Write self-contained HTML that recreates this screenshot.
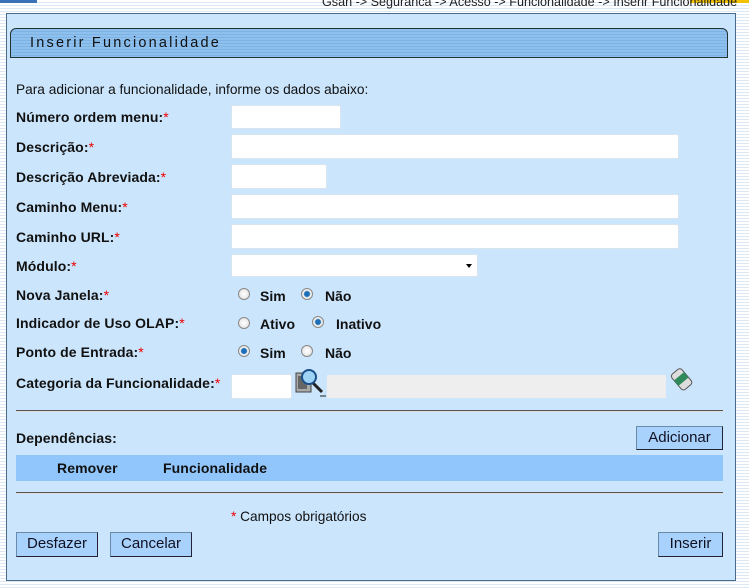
<!DOCTYPE html>
<html><head><meta charset="utf-8">
<style>
*{margin:0;padding:0;box-sizing:border-box}
body{width:749px;height:588px;overflow:hidden;position:relative;font-family:"Liberation Sans",Arial,sans-serif;
background:repeating-linear-gradient(180deg,#ffffff 0 2px,#dbe9f7 2px 3px);}
.a{position:absolute}
.panel{left:6px;top:13px;width:730px;height:568px;background:#cbe5fc;border:1px solid #4a6a8a;}
.title{left:10px;top:28px;width:718px;height:30px;border:1px solid #233;border-radius:6px 6px 0 0;
background:repeating-linear-gradient(180deg,#8ec0ee 0 2px,#7fb3e6 2px 3px);font-size:14.5px;letter-spacing:2.2px;color:#111;padding:6px 0 0 19px}
.lbl{font-size:14px;font-weight:bold;color:#111;left:16px;letter-spacing:0.1px}
.r{color:#e00;font-weight:normal}
.inp{background:#fff;border:1px solid #d8e4ee;border-radius:2px}
.rad{width:12px;height:12px;border-radius:50%;border:1px solid #888;background:radial-gradient(#fff,#ddd)}
.rad.on{background:radial-gradient(#1a6fb8 0 2.5px,#eee 3.5px)}
.rt{font-size:14px;font-weight:bold;color:#111}
.btn{background:#a8d2fb;border:1px solid #6a8aaa;border-right-color:#223;border-bottom-color:#223;font-size:15px;color:#112;text-align:center;line-height:22px}
.hr{left:16px;width:707px;height:2px;background:#555;border-bottom:1px solid #ddd}
</style></head><body>
<div class="a" style="left:0;top:0;width:37px;height:3px;background:#3a72b8"></div>
<div class="a" style="left:690px;top:0;width:59px;height:3px;background:#f2c200"></div>
<div class="a" style="left:322px;top:-5px;font-size:12.6px;color:#222">Gsan -&gt; Seguranca -&gt; Acesso -&gt; Funcionalidade -&gt; Inserir Funcionalidade</div>
<div class="a panel"></div>
<div class="a title">Inserir Funcionalidade</div>
<div class="a" style="left:16px;top:82px;font-size:13.7px;color:#111">Para adicionar a funcionalidade, informe os dados abaixo:</div>

<div class="a lbl" style="top:109px">Número ordem menu:<span class="r">*</span></div>
<div class="a inp" style="left:231px;top:105px;width:110px;height:24px"></div>
<div class="a lbl" style="top:139px">Descrição:<span class="r">*</span></div>
<div class="a inp" style="left:231px;top:134px;width:448px;height:25px"></div>
<div class="a lbl" style="top:169px">Descrição Abreviada:<span class="r">*</span></div>
<div class="a inp" style="left:231px;top:164px;width:96px;height:25px"></div>
<div class="a lbl" style="top:199px">Caminho Menu:<span class="r">*</span></div>
<div class="a inp" style="left:231px;top:194px;width:448px;height:25px"></div>
<div class="a lbl" style="top:229px">Caminho URL:<span class="r">*</span></div>
<div class="a inp" style="left:231px;top:224px;width:448px;height:25px"></div>
<div class="a lbl" style="top:258px">Módulo:<span class="r">*</span></div>
<div class="a inp" style="left:231px;top:254px;width:247px;height:23px"></div>
<div class="a" style="left:466px;top:264px;border-left:3px solid transparent;border-right:3px solid transparent;border-top:4px solid #000"></div>

<div class="a lbl" style="top:287px">Nova Janela:<span class="r">*</span></div>
<div class="a rad" style="left:238px;top:288px"></div><div class="a rt" style="left:260px;top:288px">Sim</div>
<div class="a rad on" style="left:301px;top:288px"></div><div class="a rt" style="left:325px;top:288px">Não</div>
<div class="a lbl" style="top:315px">Indicador de Uso OLAP:<span class="r">*</span></div>
<div class="a rad" style="left:238px;top:317px"></div><div class="a rt" style="left:260px;top:316px">Ativo</div>
<div class="a rad on" style="left:312px;top:316px"></div><div class="a rt" style="left:336px;top:316px">Inativo</div>
<div class="a lbl" style="top:344px">Ponto de Entrada:<span class="r">*</span></div>
<div class="a rad on" style="left:238px;top:345px"></div><div class="a rt" style="left:260px;top:345px">Sim</div>
<div class="a rad" style="left:301px;top:345px"></div><div class="a rt" style="left:325px;top:345px">Não</div>

<div class="a lbl" style="top:375px">Categoria da Funcionalidade:<span class="r">*</span></div>
<div class="a inp" style="left:231px;top:374px;width:61px;height:25px"></div>
<svg class="a" style="left:295px;top:367px" width="32" height="30" viewBox="0 0 32 30">
<rect x="1" y="6" width="15" height="19" fill="#aaa" stroke="#444"/><rect x="3" y="9" width="9" height="13" fill="#666"/>
<line x1="18" y1="16" x2="27" y2="25" stroke="#222" stroke-width="3"/>
<circle cx="14" cy="10" r="7" fill="#9fd3f5" stroke="#1a4f8a" stroke-width="2"/>
<line x1="25" y1="29" x2="31" y2="29" stroke="#222"/></svg>
<div class="a" style="left:327px;top:375px;width:339px;height:23px;background:#eeeeee"></div>
<svg class="a" style="left:670px;top:366px" width="24" height="26" viewBox="0 0 24 26">
<g transform="rotate(-40 12 13)"><rect x="5" y="3" width="13" height="20" rx="3" fill="#ddd" stroke="#555"/><rect x="5" y="9" width="13" height="7" fill="#2e8a5a"/></g></svg>

<div class="a hr" style="top:410px"></div>
<div class="a lbl" style="top:430px">Dependências:</div>
<div class="a btn" style="left:636px;top:426px;width:87px;height:24px">Adicionar</div>
<div class="a" style="left:16px;top:455px;width:707px;height:26px;background:#90c6fb"></div>
<div class="a lbl" style="left:57px;top:460px">Remover</div>
<div class="a lbl" style="left:163px;top:460px">Funcionalidade</div>
<div class="a hr" style="top:492px"></div>
<div class="a" style="left:231px;top:509px;font-size:13.7px;color:#111"><span class="r">*</span> Campos obrigatórios</div>
<div class="a btn" style="left:16px;top:532px;width:82px;height:25px">Desfazer</div>
<div class="a btn" style="left:110px;top:532px;width:82px;height:25px">Cancelar</div>
<div class="a btn" style="left:658px;top:532px;width:65px;height:25px">Inserir</div>
</body></html>
